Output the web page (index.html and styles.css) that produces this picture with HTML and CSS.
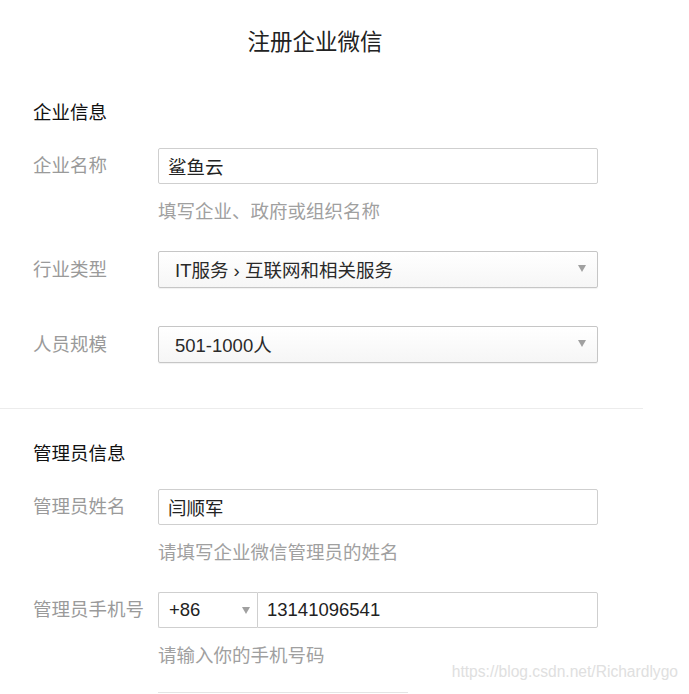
FILE: index.html
```html
<!DOCTYPE html>
<html lang="zh-CN">

<head>
    <meta charset="UTF-8">
    <meta name="viewport" content="width=device-width, initial-scale=1.0">
    <title>注册企业微信</title>
    <link rel="stylesheet" href="styles.css">
</head>

<body>
    <h1 class="title">注册企业微信</h1>

    <div class="section first">
        <h2 class="section-title">企业信息</h2>

        <div class="group">
            <div class="field">
                <span class="label">企业名称</span>
                <input class="text-input" type="text" value="鲨鱼云">
            </div>
            <div class="hint">填写企业、政府或组织名称</div>
        </div>

        <div class="group no-hint">
            <div class="field">
                <span class="label">行业类型</span>
                <div class="select">
                    <span>IT服务 › 互联网和相关服务</span>
                    <svg class="arrow" width="8" height="7" viewBox="0 0 8 7"><path d="M0 0h8L4 7z" fill="#a0a0a0"/></svg>
                </div>
            </div>
        </div>

        <div class="group no-hint">
            <div class="field">
                <span class="label">人员规模</span>
                <div class="select">
                    <span>501-1000人</span>
                    <svg class="arrow" width="8" height="7" viewBox="0 0 8 7"><path d="M0 0h8L4 7z" fill="#a0a0a0"/></svg>
                </div>
            </div>
        </div>
    </div>

    <div class="section">
        <h2 class="section-title second">管理员信息</h2>

        <div class="group">
            <div class="field">
                <span class="label">管理员姓名</span>
                <input class="text-input" type="text" value="闫顺军">
            </div>
            <div class="hint">请填写企业微信管理员的姓名</div>
        </div>

        <div class="group">
            <div class="field">
                <span class="label">管理员手机号</span>
                <div class="phone">
                    <div class="phone-code">
                        <span>+86</span>
                        <svg class="arrow" width="8" height="7" viewBox="0 0 8 7"><path d="M0 0h8L4 7z" fill="#a0a0a0"/></svg>
                    </div>
                    <input class="phone-number" type="text" value="13141096541">
                </div>
            </div>
            <div class="hint">请输入你的手机号码</div>
        </div>

        <div class="next-field"></div>
    </div>

    <div class="watermark">https://blog.csdn.net/Richardlygo</div>
</body>

</html>
```

FILE: styles.css
```css
body {
    margin: 0;
    font-family: "Liberation Sans", "Noto Sans CJK SC", sans-serif;
    color: #222;
    background: #fff;
    overflow: hidden;
}

.title {
    width: 630px;
    margin: 0;
    padding-top: 28px;
    text-align: center;
    font-size: 22.5px;
    font-weight: normal;
    line-height: 30px;
    color: #222;
}

.section {
    width: 610px;
    padding-left: 33px;
}

.section.first {
    padding-bottom: 7px;
    border-bottom: 1px solid #ececec;
}

.section-title {
    margin: 42px 0 22px;
    font-size: 18.5px;
    font-weight: normal;
    line-height: 26px;
    color: #111;
}

.section-title.second {
    margin-top: 32px;
}

.group {
    margin-bottom: 26px;
}

.group.no-hint {
    margin-bottom: 38px;
}

.field {
    display: flex;
    align-items: center;
}

.label {
    width: 125px;
    flex-shrink: 0;
    font-size: 18.5px;
    line-height: 26px;
    color: #9a9a9a;
}

.text-input {
    width: 440px;
    height: 36px;
    box-sizing: border-box;
    margin: 0;
    padding: 0 9px;
    border: 1px solid #cfcfcf;
    border-radius: 2px;
    font-family: inherit;
    font-size: 18.5px;
    color: #222;
    outline: none;
}

.hint {
    margin: 15px 0 0 125px;
    font-size: 18.5px;
    line-height: 26px;
    color: #a0a0a0;
}

.select {
    width: 440px;
    height: 37px;
    box-sizing: border-box;
    display: flex;
    align-items: center;
    justify-content: space-between;
    padding: 0 11px 2px 16px;
    border: 1px solid #c6c6c6;
    border-radius: 2px;
    background: linear-gradient(#fff, #f6f6f6);
    box-shadow: 0 1px 1px rgba(0, 0, 0, 0.06);
    font-size: 18.5px;
    color: #2a2a2a;
}

.arrow {
    display: block;
}

.phone {
    display: flex;
    width: 440px;
    height: 36px;
}

.phone-code {
    width: 99px;
    box-sizing: border-box;
    display: flex;
    align-items: center;
    justify-content: space-between;
    padding: 0 7px 0 10px;
    border: 1px solid #cfcfcf;
    border-right: none;
    border-radius: 2px 0 0 2px;
    font-size: 18.5px;
    color: #222;
}

.phone-number {
    flex: 1;
    min-width: 0;
    box-sizing: border-box;
    margin: 0;
    padding: 0 9px;
    border: 1px solid #cfcfcf;
    border-radius: 0 2px 2px 0;
    font-family: inherit;
    font-size: 18.5px;
    color: #222;
    outline: none;
}

.next-field {
    width: 250px;
    height: 30px;
    margin: -3px 0 0 125px;
    border-top: 1px solid #e4e4e4;
}

.watermark {
    position: absolute;
    top: 662px;
    right: 11px;
    font-size: 15.6px;
    line-height: 20px;
    color: #e0e0e0;
}
```
